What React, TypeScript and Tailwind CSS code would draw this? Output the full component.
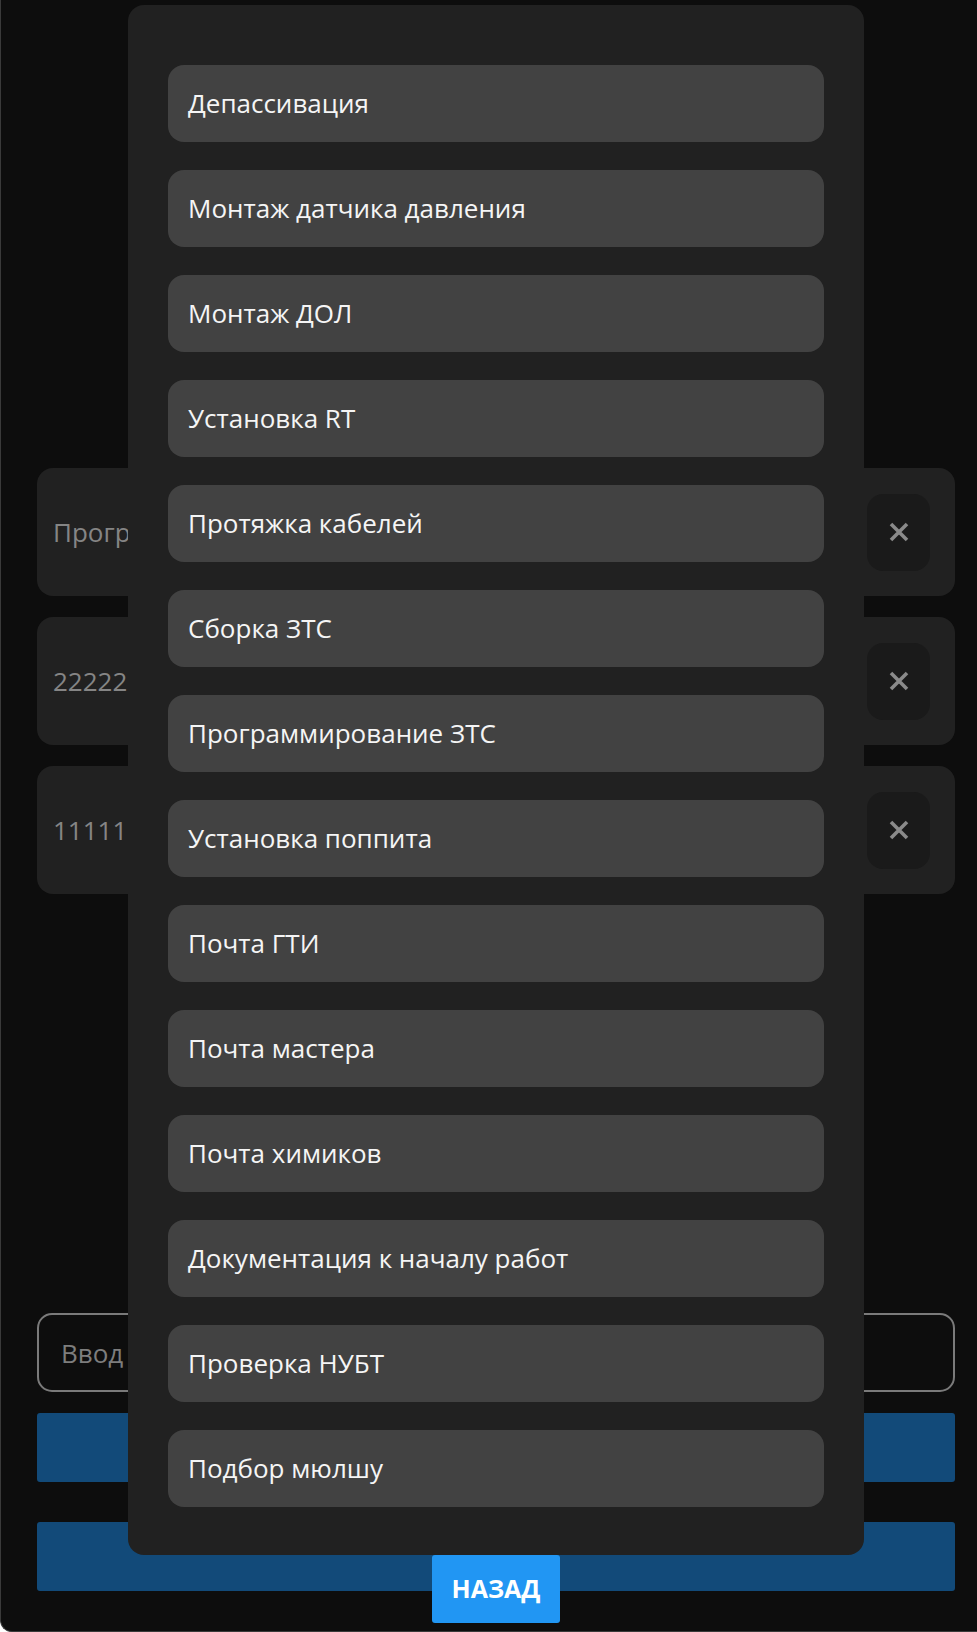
import { useState } from "react";

type Row = {
    id: number;
    text: string;
};

const works = [
    "Депассивация",
    "Монтаж датчика давления",
    "Монтаж ДОЛ",
    "Установка RT",
    "Протяжка кабелей",
    "Сборка ЗТС",
    "Программирование ЗТС",
    "Установка поппита",
    "Почта ГТИ",
    "Почта мастера",
    "Почта химиков",
    "Документация к началу работ",
    "Проверка НУБТ",
    "Подбор мюлшу",
];

const rows: Row[] = [
    { id: 1, text: "Программирование ЗТС" },
    { id: 2, text: "22222" },
    { id: 3, text: "11111" },
];

function CloseIcon() {
    return (
        <svg width="22" height="22" viewBox="0 0 22 22" fill="none">
            <path d="M3 3 L19 19 M19 3 L3 19" stroke="#8a8a8a" strokeWidth="3.6" strokeLinecap="butt" />
        </svg>
    );
}

export default function App() {
    const [showList, setShowList] = useState(true);
    const [value, setValue] = useState("");

    return (
        <div
            className="relative h-[1632px] bg-[#0d0d0d] border-b border-l border-[#3a3a3a] rounded-bl-xl overflow-hidden"
            style={{ fontFamily: '"Open Sans", "Noto Sans", sans-serif' }}
        >
            {/* main page */}
            <div className="flex flex-col h-full pl-9 pr-[22px] pt-[468px] pb-[40px]">
                <div className="flex flex-col gap-[21px]">
                    {rows.map((row) => (
                        <div key={row.id} className="h-[128px] bg-[#212121] rounded-2xl flex items-center justify-between pl-4 pr-[25px]">
                            <span className="text-[26px] text-[#858585] whitespace-nowrap">{row.text}</span>
                            <button className="w-[63px] h-[77px] bg-[#1a1a1a] rounded-2xl flex items-center justify-center">
                                <CloseIcon />
                            </button>
                        </div>
                    ))}
                </div>

                <div className="mt-auto flex flex-col">
                    <input
                        value={value}
                        onChange={(e) => setValue(e.target.value)}
                        placeholder="Ввод названия работы"
                        className="h-[79px] w-full bg-transparent border-2 border-[#7a7a7a] rounded-[15px] px-[22px] text-[26px] text-white placeholder:text-[#7d7d7d] outline-none"
                    />
                    <button className="mt-[21px] h-[69px] w-full bg-[#124a79] rounded-[3px]"></button>
                    <button className="mt-[40px] h-[69px] w-full bg-[#124a79] rounded-[3px]"></button>
                </div>
            </div>

            {/* list popup */}
            {showList && (
                <div className="absolute inset-0 pl-9 pr-[22px] pt-[5px] flex flex-col items-center">
                    <div className="w-[736px] bg-[#212121] rounded-2xl pt-[60px] px-10 pb-[48px] flex flex-col gap-[28px]">
                        {works.map((w, i) => (
                            <div key={i} className="h-[77px] bg-[#424242] rounded-2xl flex items-center px-5 cursor-pointer">
                                <span className="text-[26px] text-[#f5f5f5] whitespace-nowrap">{w}</span>
                            </div>
                        ))}
                    </div>
                    <button
                        onClick={() => setShowList(false)}
                        className="w-[128px] h-[68px] bg-[#2196f3] rounded-[3px] text-white text-[25px] font-bold"
                    >
                        НАЗАД
                    </button>
                </div>
            )}
        </div>
    );
}
